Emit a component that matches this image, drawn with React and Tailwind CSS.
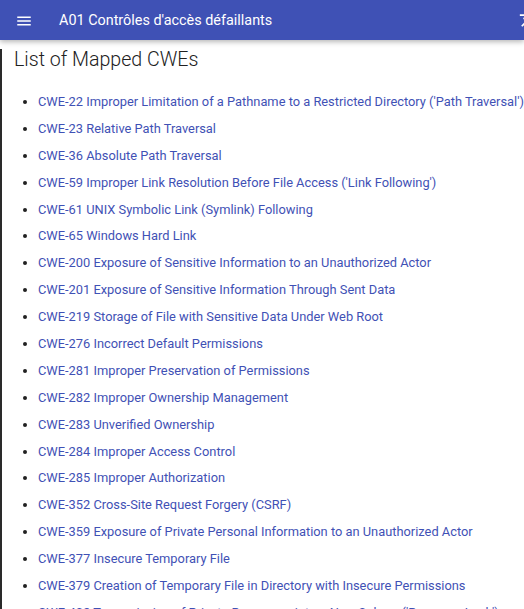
import React from "react";

const cwes = [
  "CWE-22 Improper Limitation of a Pathname to a Restricted Directory ('Path Traversal')",
  "CWE-23 Relative Path Traversal",
  "CWE-36 Absolute Path Traversal",
  "CWE-59 Improper Link Resolution Before File Access ('Link Following')",
  "CWE-61 UNIX Symbolic Link (Symlink) Following",
  "CWE-65 Windows Hard Link",
  "CWE-200 Exposure of Sensitive Information to an Unauthorized Actor",
  "CWE-201 Exposure of Sensitive Information Through Sent Data",
  "CWE-219 Storage of File with Sensitive Data Under Web Root",
  "CWE-276 Incorrect Default Permissions",
  "CWE-281 Improper Preservation of Permissions",
  "CWE-282 Improper Ownership Management",
  "CWE-283 Unverified Ownership",
  "CWE-284 Improper Access Control",
  "CWE-285 Improper Authorization",
  "CWE-352 Cross-Site Request Forgery (CSRF)",
  "CWE-359 Exposure of Private Personal Information to an Unauthorized Actor",
  "CWE-377 Insecure Temporary File",
  "CWE-379 Creation of Temporary File in Directory with Insecure Permissions",
  "CWE-402 Transmission of Private Resources into a New Sphere ('Resource Leak')",
];

export default function App() {
  return (
    <div className="h-[609px] w-[524px] overflow-hidden bg-white font-['Roboto',sans-serif]">
      <header className="relative z-10 flex h-10 items-center bg-[#3f51b5] shadow-[0_2px_5px_rgba(0,0,0,0.28)]">
        <svg className="ml-[15px] mt-[2px] h-[18px] w-[18px]" viewBox="0 0 24 24" fill="white">
          <path d="M3 18h18v-2H3v2zm0-5h18v-2H3v2zm0-7v2h18V6H3z" />
        </svg>
        <h1 className="ml-[26px] mt-[2px] text-[14.4px] leading-none text-white">A01 Contrôles d'accès défaillants</h1>
        <div className="ml-auto mr-[-15px] mt-[2px] leading-none">
          <svg className="h-[20px] w-[20px]" viewBox="0 0 24 24" fill="white">
            <path d="M12.87 15.07l-2.54-2.51.03-.03c1.74-1.94 2.98-4.17 3.71-6.53H17V4h-7V2H8v2H1v1.99h11.17C11.5 7.92 10.44 9.75 9 11.35 8.07 10.32 7.3 9.19 6.690 8h-2c.73 1.63 1.73 3.17 2.98 4.56l-5.09 5.02L4 19l5-5 3.11 3.11.76-2.04zM18.5 10h-2L12 22h2l1.12-3h4.75L21 22h2l-4.5-12zm-2.62 7l1.62-4.33L19.12 17h-3.24z" />
          </svg>
        </div>
      </header>
      <main className="h-full border-l-2 border-[#2a2a2a] pl-3">
        <h2 className="mt-[9px] text-[19.6px] font-light leading-[22px] text-[#212121]">List of Mapped CWEs</h2>
        <ul className="mt-[22px] list-disc pl-[24px] text-[12.85px] leading-[17px] text-[#3f51b5] marker:text-[#212121]">
          {cwes.map((c) => (
            <li key={c} className="mb-[9.9px] whitespace-nowrap">
              <a href="#" className="text-[#3f51b5]">{c}</a>
            </li>
          ))}
        </ul>
      </main>
    </div>
  );
}
